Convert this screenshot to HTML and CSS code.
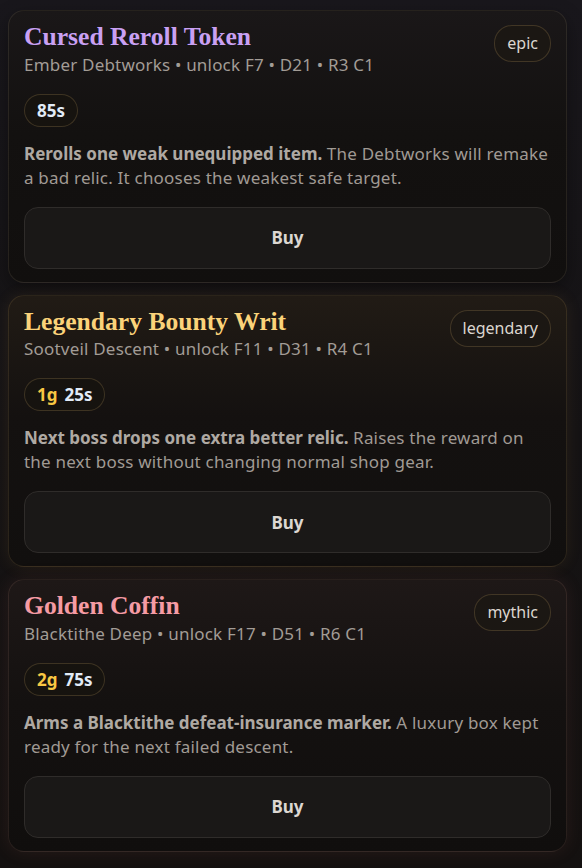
FILE: index.html
```html
<!DOCTYPE html>
<html lang="en">
<head>
    <meta charset="UTF-8">
    <meta name="viewport" content="width=device-width, initial-scale=1.0">
    <link rel="stylesheet" href="styles.css">
    <title>Relic Shop</title>
</head>
<body>
    <div class="shop-list">
        <div class="card epic">
            <div class="card-head">
                <div class="card-info">
                    <div class="card-title">Cursed Reroll Token</div>
                    <div class="card-sub">Ember Debtworks • unlock F7 • D21 • R3 C1</div>
                </div>
                <span class="rarity">epic</span>
            </div>
            <div class="price"><span class="secs">85s</span></div>
            <p class="desc"><b>Rerolls one weak unequipped item.</b> The Debtworks will remake a bad relic. It chooses the weakest safe target.</p>
            <button class="buy">Buy</button>
        </div>

        <div class="card legendary">
            <div class="card-head">
                <div class="card-info">
                    <div class="card-title">Legendary Bounty Writ</div>
                    <div class="card-sub">Sootveil Descent • unlock F11 • D31 • R4 C1</div>
                </div>
                <span class="rarity">legendary</span>
            </div>
            <div class="price"><span class="gold">1g</span><span class="secs">25s</span></div>
            <p class="desc"><b>Next boss drops one extra better relic.</b> Raises the reward on the next boss without changing normal shop gear.</p>
            <button class="buy">Buy</button>
        </div>

        <div class="card mythic">
            <div class="card-head">
                <div class="card-info">
                    <div class="card-title">Golden Coffin</div>
                    <div class="card-sub">Blacktithe Deep • unlock F17 • D51 • R6 C1</div>
                </div>
                <span class="rarity">mythic</span>
            </div>
            <div class="price"><span class="gold">2g</span><span class="secs">75s</span></div>
            <p class="desc"><b>Arms a Blacktithe defeat-insurance marker.</b> A luxury box kept ready for the next failed descent.</p>
            <button class="buy">Buy</button>
        </div>
    </div>
</body>
</html>
```

FILE: styles.css
```css
body {
    margin: 0;
    background: linear-gradient(180deg, #19171c 0%, #151314 50%, #141110 100%);
    color: #a19b95;
    font-family: "Noto Sans", "Open Sans", sans-serif;
    min-height: 100vh;
}

.shop-list {
    display: flex;
    flex-direction: column;
    gap: 12px;
    padding: 10px 15px 0 8px;
}

.card {
    border: 1px solid rgba(255, 230, 190, 0.09);
    border-radius: 16px;
    padding: 13px 15px 13px 15px;
    background: #131110;
}

.card.epic {
    background: linear-gradient(180deg, #1a1718 0%, #131110 45%, #110f0e 100%);
    box-shadow: 0 6px 18px rgba(0, 0, 0, 0.35);
}

.card.legendary {
    background: linear-gradient(180deg, #211b15 0%, #141110 45%, #110f0e 100%);
    border-color: rgba(255, 210, 130, 0.11);
    box-shadow: 0 0 16px rgba(190, 140, 60, 0.1);
}

.card.mythic {
    background: linear-gradient(180deg, #1e1817 0%, #141110 45%, #100e0d 100%);
    border-color: rgba(255, 190, 170, 0.1);
    box-shadow: 0 0 18px rgba(170, 90, 80, 0.12);
}

.card-head {
    display: flex;
    justify-content: space-between;
    align-items: flex-start;
}

.card-title {
    font-family: "Liberation Serif", "Times New Roman", serif;
    font-weight: bold;
    font-size: 25.6px;
    line-height: 1;
}

.epic .card-title { color: #c9a0f3; }
.legendary .card-title { color: #fbd37a; }
.mythic .card-title { color: #f59ba4; }

.card-sub {
    margin-top: 3px;
    font-size: 17px;
    line-height: 24px;
    letter-spacing: 0.2px;
    color: #a29c96;
}

.rarity {
    margin-top: 1px;
    padding: 0 12px;
    height: 35px;
    line-height: 35px;
    border: 1px solid rgba(220, 180, 110, 0.2);
    border-radius: 18px;
    background: #1b1713;
    color: #dcd6d0;
    font-size: 16px;
}

.price {
    display: inline-flex;
    gap: 7px;
    align-items: center;
    margin-top: 17px;
    height: 31px;
    padding: 0 12px;
    border: 1px solid rgba(220, 180, 110, 0.2);
    border-radius: 17px;
    background: #16130f;
    font-size: 17px;
    font-weight: bold;
}

.gold { color: #f9c843; }
.secs { color: #e1ebf7; }

.desc {
    margin: 15px 0 0;
    font-size: 17px;
    line-height: 24px;
    letter-spacing: 0.2px;
    color: #a09a94;
}

.desc b {
    letter-spacing: 0;
    color: #afa9a3;
}

.buy {
    display: block;
    width: 100%;
    margin-top: 17px;
    height: 62px;
    border: 1px solid #2f2c2a;
    border-radius: 14px;
    background: #1a1817;
    color: #dcd7d2;
    font-family: "Noto Sans", "Open Sans", sans-serif;
    font-size: 17px;
    font-weight: bold;
    cursor: pointer;
}
```
